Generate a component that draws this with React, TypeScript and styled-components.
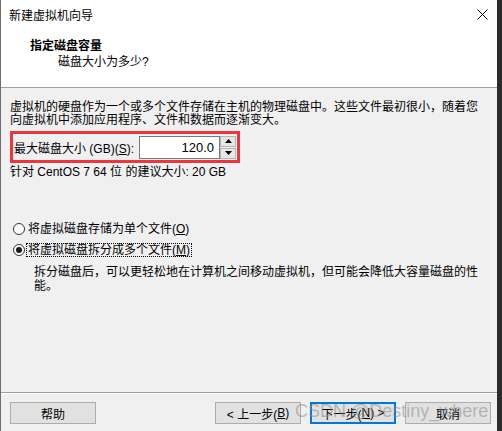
import styled, { createGlobalStyle } from 'styled-components';

const GlobalStyle = createGlobalStyle`
  html, body {
    margin: 0;
    padding: 0;
    background: #2b2b2b;
  }
  body {
    font-family: 'Liberation Sans', 'Noto Sans CJK SC', sans-serif;
    font-size: 12px;
    color: #000;
  }
`;

function App() {
  return (
    <>
      <GlobalStyle />
      <Window>
        <TitleBar>
          <span>新建虚拟机向导</span>
          <CloseIcon width="11" height="11" viewBox="0 0 11 11">
            <path d="M0.5 0.5 L10.5 10.5 M10.5 0.5 L0.5 10.5" stroke="#000" strokeWidth="1" />
          </CloseIcon>
        </TitleBar>
        <Header>
          <HeaderTitle>指定磁盘容量</HeaderTitle>
          <HeaderSub>磁盘大小为多少?</HeaderSub>
        </Header>
        <Body>
          <Paragraph>
            虚拟机的硬盘作为一个或多个文件存储在主机的物理磁盘中。这些文件最初很小，随着您
            <br />
            向虚拟机中添加应用程序、文件和数据而逐渐变大。
          </Paragraph>
          <Highlight>
            <FieldLabel>
              最大磁盘大小 (GB)(<u>S</u>):
            </FieldLabel>
            <NumberBox>120.0</NumberBox>
            <Spinner>
              <SpinButton>
                <Arrow viewBox="0 0 7 4" width="7" height="4">
                  <path d="M3.5 0 L7 4 L0 4 Z" fill="#000" />
                </Arrow>
              </SpinButton>
              <SpinButton>
                <Arrow viewBox="0 0 7 4" width="7" height="4">
                  <path d="M0 0 L7 0 L3.5 4 Z" fill="#000" />
                </Arrow>
              </SpinButton>
            </Spinner>
          </Highlight>
          <Hint>针对 CentOS 7 64 位 的建议大小: 20 GB</Hint>

          <RadioRow $first>
            <Radio />
            <RadioText>
              将虚拟磁盘存储为单个文件(<u>O</u>)
            </RadioText>
          </RadioRow>
          <RadioRow>
            <Radio $checked />
            <RadioText $focused>
              将虚拟磁盘拆分成多个文件(<u>M</u>)
            </RadioText>
          </RadioRow>
          <Description>
            拆分磁盘后，可以更轻松地在计算机之间移动虚拟机，但可能会降低大容量磁盘的性
            <br />
            能。
          </Description>
        </Body>
        <Footer>
          <Button>帮助</Button>
          <Spacer />
          <Button>
            &lt; 上一步(<u>B</u>)
          </Button>
          <Button $primary>
            下一步(<u>N</u>) &gt;
          </Button>
          <Button>取消</Button>
          <Watermark>CSDN @Destiny_where</Watermark>
        </Footer>
      </Window>
    </>
  );
}

export default App;

const Window = styled.div`
  position: relative;
  width: 496px;
  height: 431px;
  border-left: 1px solid #6e6e6e;
  background: #f0f0f0;
  display: flex;
  flex-direction: column;
  overflow: hidden;
`;

const TitleBar = styled.div`
  height: 29px;
  background: #fff;
  display: flex;
  align-items: center;
  justify-content: space-between;
  padding: 0 9px 0 8px;
  box-sizing: border-box;
`;

const CloseIcon = styled.svg`
  display: block;
`;

const Header = styled.div`
  height: 58px;
  background: #fff;
  border-bottom: 1px solid #a0a0a0;
  padding-left: 29px;
  display: flex;
  flex-direction: column;
`;

const HeaderTitle = styled.div`
  margin-top: 10px;
  font-weight: bold;
  line-height: 14px;
`;

const HeaderSub = styled.div`
  margin-top: 2px;
  padding-left: 28px;
  line-height: 14px;
`;

const Body = styled.div`
  height: 304px;
  padding: 13px 0 0 9px;
  box-sizing: border-box;
  display: flex;
  flex-direction: column;
`;

const Paragraph = styled.div`
  line-height: 13px;
  white-space: nowrap;
`;

const Highlight = styled.div`
  margin-top: 4px;
  width: 230px;
  height: 32px;
  box-sizing: border-box;
  border: 3px solid #e8383d;
  display: flex;
  align-items: center;
  padding-left: 1px;
`;

const FieldLabel = styled.span`
  width: 125px;
  white-space: nowrap;
`;

const NumberBox = styled.div`
  width: 81px;
  height: 23px;
  box-sizing: border-box;
  background: #fff;
  border: 1px solid #7a7a7a;
  text-align: right;
  padding-right: 5px;
  line-height: 21px;
  font-size: 13px;
`;

const Spinner = styled.div`
  width: 16px;
  height: 23px;
  display: flex;
  flex-direction: column;
  gap: 1px;
`;

const SpinButton = styled.div`
  flex: 1;
  background: #e6e6e6;
  border: 1px solid #b4b4b4;
  display: flex;
  align-items: center;
  justify-content: center;
`;

const Arrow = styled.svg`
  display: block;
`;

const Hint = styled.div`
  margin-top: 3px;
  line-height: 13px;
`;

const RadioRow = styled.div<{ $first?: boolean }>`
  margin-top: ${(p) => (p.$first ? '42px' : '5px')};
  height: 16px;
  display: flex;
  align-items: center;
  padding-left: 3px;
`;

const Radio = styled.span<{ $checked?: boolean }>`
  width: 12px;
  height: 12px;
  box-sizing: border-box;
  border-radius: 50%;
  border: 1px solid #333;
  background: #fff;
  position: relative;
  margin-right: 2px;

  &::after {
    content: '';
    display: ${(p) => (p.$checked ? 'block' : 'none')};
    position: absolute;
    left: 2px;
    top: 2px;
    width: 6px;
    height: 6px;
    border-radius: 50%;
    background: #1a1a1a;
  }
`;

const RadioText = styled.span<{ $focused?: boolean }>`
  padding: 0 1px;
  line-height: 12px;
  outline: ${(p) => (p.$focused ? '1px dotted #000' : 'none')};
  white-space: nowrap;
`;

const Description = styled.div`
  margin-top: 7px;
  padding-left: 24px;
  line-height: 14px;
  white-space: nowrap;
`;

const Footer = styled.div`
  position: relative;
  flex: 1;
  border-top: 1px solid #a0a0a0;
  box-shadow: inset 0 1px 0 #fff;
  display: flex;
  align-items: flex-start;
  gap: 9px;
  padding: 9px 0 0 9px;
  box-sizing: border-box;
`;

const Spacer = styled.div`
  flex: 0 0 101px;
`;

const Button = styled.div<{ $primary?: boolean }>`
  width: 86px;
  height: 22px;
  box-sizing: border-box;
  background: #e1e1e1;
  border: ${(p) => (p.$primary ? '2px solid #0078d7' : '1px solid #adadad')};
  display: flex;
  align-items: center;
  justify-content: center;
  white-space: nowrap;
`;

const Watermark = styled.div`
  position: absolute;
  left: 294px;
  top: 8px;
  font-family: 'Liberation Sans', sans-serif;
  font-size: 18px;
  color: rgba(140, 140, 140, 0.55);
  white-space: nowrap;
  pointer-events: none;
`;
